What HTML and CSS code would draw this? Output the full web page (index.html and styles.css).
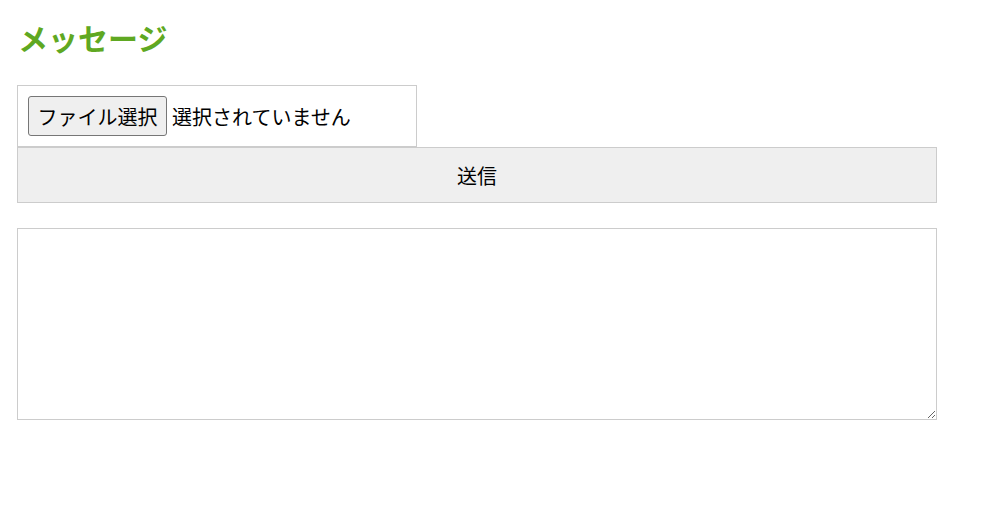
FILE: index.html
```html
<!DOCTYPE html>
<html lang="ja">
<head>
<meta charset="utf-8">
<title>メッセージ</title>
<link rel="stylesheet" href="styles.css">
</head>
<body>
<main class="page">
  <h1 class="title">メッセージ</h1>
  <form class="form">
    <div class="file-box">
      <button type="button" class="file-btn">ファイル選択</button>
      <span class="file-name">選択されていません</span>
    </div>
    <button type="button" class="send">送信</button>
    <textarea class="message"></textarea>
  </form>
</main>
</body>
</html>
```

FILE: styles.css
```css
html, body {
  margin: 0;
  padding: 0;
  background: #fff;
}
body {
  font-family: "Noto Sans CJK JP", "Noto Sans", sans-serif;
  color: #000;
}
.page {
  padding: 15px 17px 0 17px;
}
.title {
  margin: 0 0 26px 1px;
  font-size: 30px;
  line-height: 44px;
  font-weight: bold;
  color: #5fa822;
}
.form {
  display: flex;
  flex-direction: column;
  align-items: flex-start;
}
.file-box {
  box-sizing: border-box;
  width: 400px;
  height: 62px;
  border: 1px solid #cccccc;
  padding: 10px;
  display: flex;
  align-items: center;
  gap: 5px;
}
.file-btn {
  box-sizing: border-box;
  width: 139px;
  height: 40px;
  padding: 0;
  margin: 0;
  font-family: inherit;
  font-size: 20px;
  color: #000;
  background: #efefef;
  border: 1px solid #767676;
  border-radius: 3px;
}
.file-name {
  font-size: 20px;
}
.send {
  box-sizing: border-box;
  width: 920px;
  height: 56px;
  margin: 0;
  padding: 0;
  font-family: inherit;
  font-size: 20px;
  color: #000;
  background: #efefef;
  border: 1px solid #cccccc;
  border-radius: 0;
}
.message {
  box-sizing: border-box;
  display: block;
  width: 920px;
  height: 192px;
  margin: 25px 0 0 0;
  border: 1px solid #cccccc;
  border-radius: 0;
  font-family: inherit;
  font-size: 20px;
}
```
